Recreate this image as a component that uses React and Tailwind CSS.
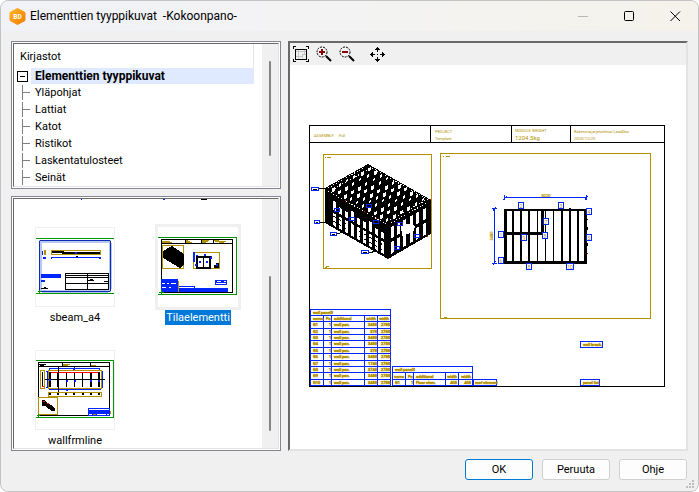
import React from 'react';

const GOLD = '#b39000';
const BLUE = '#0026ff';
const GREEN = '#009600';

const libraries = ['Yläpohjat', 'Lattiat', 'Katot', 'Ristikot', 'Laskentatulosteet', 'Seinät'];

const Logo = () => (
  <svg width="17" height="17" viewBox="0 0 17 17" aria-hidden="true">
    <defs>
      <linearGradient id="logo" x1="0" y1="0" x2="1" y2="1">
        <stop offset="0" stopColor="#ffb61f" />
        <stop offset="1" stopColor="#f77b05" />
      </linearGradient>
    </defs>
    <path d="M8.5 0.5 L16 4.5 V12.5 L8.5 16.5 L1 12.5 V4.5 Z" fill="url(#logo)" stroke="url(#logo)" strokeLinejoin="round" />
    <text x="8.5" y="11" textAnchor="middle" fontSize="6.5" fontWeight="700" fill="#fff">BD</text>
  </svg>
);

const TitleButton = ({ label, children }) => (
  <button aria-label={label} className="flex h-[30px] w-[46px] items-center justify-center">
    {children}
  </button>
);

const TitleBar = () => (
  <header className="flex h-[30px] items-center bg-linear-to-r from-[#f1f2f7] via-[#f3f3f3] to-[#f4f2ea] pl-2">
    <Logo />
    <h1 className="ml-1 flex-1 whitespace-pre text-[12px] leading-4">{'Elementtien tyyppikuvat  -Kokoonpano-'}</h1>
    <TitleButton label="Pienennä">
      <svg width="11" height="11" shapeRendering="crispEdges"><path d="M0 5.5H10" stroke="#b8b8b8" /></svg>
    </TitleButton>
    <TitleButton label="Suurenna">
      <svg width="11" height="11"><rect x="0.5" y="0.5" width="9" height="9" rx="1" fill="none" stroke="#000" /></svg>
    </TitleButton>
    <TitleButton label="Sulje">
      <svg width="11" height="11"><path d="M0.5 0.5L10 10M10 0.5L0.5 10" stroke="#000" /></svg>
    </TitleButton>
  </header>
);

const ListPanel = ({ className, thumb, children }) => (
  <section className={`border border-[#828790] bg-white p-px ${className}`}>
    <div className="flex h-full border border-t-[#696969] border-l-[#696969] border-r-[#e3e3e3] border-b-[#e3e3e3]">
      <div className="min-w-0 flex-1 overflow-hidden">{children}</div>
      <div className="w-4 shrink-0 bg-[#f0f0f0] pl-[7px]">
        <div className={`w-[2px] rounded-full bg-[#858585] ${thumb}`} />
      </div>
    </div>
  </section>
);

const LibraryTree = () => (
  <div className="mr-2 text-[11px]">
    <div className="flex h-6 items-center border-r border-[#e5e5e5] pt-[2px] pl-[6px]">Kirjastot</div>
    <div className="flex h-4 items-center pl-[3px]">
      <button aria-label="Sulje haara" className="flex h-[11px] w-[11px] items-center justify-center border border-black">
        <span className="h-px w-[5px] bg-black" />
      </button>
      <div className="ml-[3px] flex h-4 flex-1 items-center bg-[#dfe9ff] pl-1 text-[12px] font-bold">Elementtien tyyppikuvat</div>
    </div>
    <ul>
      {libraries.map((name) => (
        <li key={name} className="flex h-[17px] items-center pl-2">
          <svg width="8" height="17" shapeRendering="crispEdges" className="mr-[5px]">
            <path d="M0.5 1V16M0 8.5H8" stroke="#808080" />
          </svg>
          <span className="pt-[2px]">{name}</span>
        </li>
      ))}
    </ul>
  </div>
);

const SbeamThumb = () => (
  <svg width="78" height="78" viewBox="36 228 78 78" shapeRendering="crispEdges" fill="none">
    <path d="M36 238.5H114M36 293.5H114" stroke={GREEN} />
    <rect x="40" y="241" width="70" height="50" rx="2" stroke="#b8c6f0" strokeWidth="3" />
    <rect x="39.5" y="240.5" width="71" height="51" rx="2" stroke="#0a2cb4" />
    <path d="M42.500 251V255" stroke={BLUE} />
    <rect x="44" y="250" width="2" height="5" fill={GOLD} />
    <path d="M43 258H46" stroke={BLUE} strokeWidth="2" />
    <rect x="51.5" y="250.5" width="49" height="4" stroke={GOLD} />
    <path d="M52 251.500H64M52 252.500H100M62 253.500H100" stroke="#000" />
    <rect x="75" y="252" width="2" height="2" fill={BLUE} />
    <path d="M51 257.500H101M51 258.500H52M99 258.500H101" stroke={BLUE} />
    <path d="M76 256.500H78" stroke="#000" />
    <rect x="41" y="274" width="20" height="4" fill={BLUE} />
    <rect x="41" y="280" width="4" height="2" fill={BLUE} />
    <path d="M41 288.500H48M44 287.500H46" stroke="#000" />
    <rect x="65.500" y="273.500" width="43" height="16" stroke="#000" />
    <path d="M65 275.500H109M65 277.500H109M65 283.500H109M87.500 273V290M88 280.500H94M90 279.500H93M104 281.500H108" stroke="#000" />
    <path d="M38 291.500H41M39.500 290V293" stroke={GREEN} />
  </svg>
);

const TilaThumb = () => (
  <svg width="80" height="80" viewBox="158 227 80 80" shapeRendering="crispEdges" fill="none">
    <path d="M158 237.500H236.500V294.500H158" stroke={GREEN} />
    <rect x="161.500" y="239.500" width="71" height="53" stroke="#000" />
    <path d="M161 243.500H233M185.500 239V243M201.500 239V243M213.500 239V243" stroke="#000" />
    <path d="M162 241.500H170M162 242.500H172M186 240.500H188M186 241.500H190M186 242.500H192M202 240.500H209M202 241.500H208M202 242.500H206M214 240.500H219M215 241.500H226M219 242.500H224" stroke={GOLD} />
    <rect x="162.500" y="245.500" width="21" height="23" stroke={GOLD} />
    <path d="M163 251L172 246L184 254V264L180 268L163 258Z" fill="#000" />
    <rect x="193.500" y="252.500" width="26" height="16" stroke={GOLD} />
    <path d="M194 252V262M196 256H198M205 254V256M211 256V258" stroke={BLUE} strokeWidth="2" />
    <rect x="197" y="257" width="13" height="11" stroke="#000" strokeWidth="2" />
    <path d="M203.500 257V268" stroke="#000" />
    <path d="M195 264h2v2h-2zM199 261h2v2h-2zM206 261h2v2h-2zM210 257h2v2h-2z" fill={BLUE} />
    <path d="M214 265V268H219V263H216V265Z" fill="#000" />
    <rect x="216" y="264" width="2" height="2" fill={BLUE} />
    <rect x="161" y="279" width="17" height="13" fill={BLUE} />
    <path d="M162 283.500H165M167 283.500H169M171 283.500H176M162 287.500H166M169 287.500H171" stroke="#fff" />
    <path d="M178.500 281V292" stroke={GOLD} />
    <path d="M179 286.500H194.500V288" stroke={BLUE} />
    <rect x="179" y="288" width="49" height="4" fill={BLUE} />
    <rect x="215" y="280" width="12" height="5" fill={BLUE} />
    <path d="M217 281.500H221M224 281.500H226M216 283.500H226" stroke="#fff" />
    <path d="M159 292.500H164M161.500 290V294" stroke={GREEN} />
  </svg>
);

const WallThumb = () => (
  <svg width="78" height="78" viewBox="36 351 78 78" shapeRendering="crispEdges" fill="none">
    <path d="M36 360.500H113.500V417.500H36" stroke={GREEN} />
    <rect x="38.500" y="362.500" width="71" height="53" stroke="#000" />
    <path d="M38 366.500H110M62.500 362V366M90.500 362V366M39 364.500H46M40 365.500H44" stroke="#000" />
    <path d="M63 364.500H70M63 365.500H68M91 365.500H96" stroke={GOLD} />
    <path d="M49 368.500H100M49.500 368V371M99.500 368V371M46 371.500H49M47.500 371V387M46 387.500H49M102.500 371V388M49 389.500H101M74 367V371M66 390.500H68" stroke={BLUE} />
    <rect x="40.500" y="370.500" width="4" height="18" stroke={GOLD} />
    <path d="M42.500 372V386" stroke="#000" />
    <path d="M42 386.500H44M50 372.500H100" stroke="#f00" />
    <rect x="48.500" y="370.500" width="53" height="18" stroke={GOLD} />
    <path d="M50 372V387M58 373V387M91 373V387M99 372V387" stroke="#000" strokeWidth="2" />
    <path d="M66.500 373V387M74.500 373V387M82.500 373V387M45 379.500H105M58.500 367V394" stroke="#000" />
    <path d="M49 379h2v2h-2zM66 380h2v2h-2zM74 380h2v2h-2zM90 380h2v2h-2zM98 380h2v2h-2zM73 368h2v2h-2z" fill={BLUE} />
    <rect x="48.500" y="392.500" width="53" height="4" stroke={GOLD} />
    <path d="M49 394H51M57 394H59M65 394H67M73 394H75M82 394H84M90 394H92M98 394H100" stroke="#000" strokeWidth="2" />
    <rect x="38.500" y="397.500" width="19" height="17" stroke={GOLD} />
    <path d="M42 400L44 400L55 408V411L52 411L45 406H42Z" fill="#000" />
    <path d="M43 401h2M47 403h2" stroke="#f00" />
    <rect x="88.500" y="408.500" width="21" height="7" stroke={BLUE} />
    <rect x="89" y="410" width="21" height="4" fill={BLUE} />
    <path d="M92.500 413V415M96.500 413V415M106.500 413V415" stroke={BLUE} />
    <path d="M93 414.500H96M110.500 411V414" stroke={GOLD} />
    <path d="M37 415.500H40M38.500 414V418" stroke={GREEN} />
  </svg>
);

const DrawingItem = ({ name, selected = false, children }) => (
  <button className="flex w-[86px] flex-col items-center">
    <span className={selected ? 'border-[3px] border-[#f0f0f0]' : 'm-[3px] border border-[#f0f0f0]'}>
      {children}
    </span>
    <span className={`h-[15px] px-px text-[11px] leading-[15px] ${selected ? 'bg-[#0078d7] text-white' : ''}`}>{name}</span>
  </button>
);

const ZoomIcon = ({ plus }) => (
  <svg width="16" height="16" shapeRendering="crispEdges" fill="none">
    <circle cx="6" cy="6" r="5" fill="#f6f6f6" stroke="#000" shapeRendering="auto" strokeDasharray="2 1" />
    <path d="M3 6H9" stroke="#8b0000" strokeWidth="2" />
    {plus && <path d="M6 3V9" stroke="#8b0000" strokeWidth="2" />}
    <path d="M10 10L15 15" stroke="#000" strokeWidth="2" shapeRendering="auto" />
  </svg>
);

const Toolbar = () => (
  <div className="flex h-[22px] items-center bg-[#f0f0f0] pl-[3px]">
    <button aria-label="Sovita">
      <svg width="16" height="16" shapeRendering="crispEdges" fill="none">
        <path d="M0.500 3V0.500H3M13 0.500H15.500V3M15.500 13V15.500H13M3 15.500H0.500V13" stroke="#000" />
        <path d="M3 5.500H13M3 10.500H9M5.500 4V13M11.500 4V9M9.500 9V12M9 8.500H13" stroke="#c4c4c4" />
        <rect x="2.500" y="3.500" width="11" height="10" stroke="#000" />
      </svg>
    </button>
    <button aria-label="Lähennä" className="ml-[7px]"><ZoomIcon plus /></button>
    <button aria-label="Loitonna" className="ml-[7px]"><ZoomIcon /></button>
    <button aria-label="Siirrä" className="ml-[15px]">
      <svg width="15" height="15" shapeRendering="crispEdges">
        <path d="M7 0h1v1h1v1h1v1h-2v2h-1v-2h-2v-1h1v-1h1zM7 15h1v-1h1v-1h1v-1h-2v-2h-1v2h-2v1h1v1h1zM0 7h1v-1h1v-1h1v2h2v1h-2v2h-1v-1h-1v-1h-1zM15 7h-1v-1h-1v-1h-1v2h-2v1h2v2h1v-1h1v-1h1zM7 7h1v1h-1z" />
      </svg>
    </button>
  </div>
);

// Oblique grid on a face: origin, two edge vectors and the cut-out cells in 0..1 units
const cell = (o, u, v, a0, a1, b0, b1) => {
  const p = (a, b) => `${o[0] + u[0] * a + v[0] * b},${o[1] + u[1] * a + v[1] * b}`;
  return `${p(a0, b0)} ${p(a1, b0)} ${p(a1, b1)} ${p(a0, b1)}`;
};

const range = (n) => Array.from({ length: n }, (_, i) => i);

// Openings seen through the roof, upright slits of a few sizes
const roofOpenings = range(10).flatMap((i) =>
  range(6).map((j) => {
    const a = (i + 0.55) / 10.5;
    const b = (j + 0.5) / 6;
    const k = (i * 7 + j * 5) % 6;
    return { x: Math.round(325 + 63 * a + 43 * b), y: Math.round(188 + 36 * a - 24 * b), w: k < 3 ? 3 : 2, h: k === 4 ? 2 : 4 - (k % 2) };
  })
);

const Module3d = () => (
  <g shapeRendering="crispEdges">
    <polygon points="325,188 368,164 431,200 431,234 388,259 325,223" fill="#000" />
    {/* roof */}
    {roofOpenings.map(({ x, y, w, h }) => (
      <path key={`${x}-${y}`} d={`M${x} ${y}v${h}l${w} -1v${-h}z`} fill="#fff" />
    ))}
    <path d="M328 188L367 166M332 190L371 168M372 168L427 199M328 191L386 224M390 220L428 199M391 223L430 201" stroke="#fff" strokeDasharray="1 2" fill="none" />
    {/* long wall */}
    {range(9).map((i) => (
      <g key={i} fill="#fff">
        <polygon points={cell([325, 188], [62, 35.500], [0, 35], 0.130 + i * 0.097, 0.182 + i * 0.097, i % 3 ? 0.32 : 0.22, 0.5)} />
        <polygon points={cell([325, 188], [62, 35.500], [0, 35], 0.130 + i * 0.097, 0.182 + i * 0.097, 0.58, 0.93)} />
      </g>
    ))}
    <path d="M333 216L385 246M333 221L383 250" stroke="#000" strokeDasharray="3 3" fill="none" />
    {/* gable */}
    {range(6).map((i) => (
      <g key={i} fill="#fff">
        <polygon points={cell([388, 224], [43, -24], [0, 35], 0.06 + i * 0.15, 0.13 + i * 0.15, 0.14, 0.46)} />
        <polygon points={cell([388, 224], [43, -24], [0, 35], 0.06 + i * 0.15, 0.13 + i * 0.15, 0.56, 0.9)} />
      </g>
    ))}
    <polygon points="401,226 412,223 415,227 413,232 402,236" fill="#fff" />
    <path d="M319 188.500H325M318 222.500H325M336 234L344 232M368 253L377 251" stroke="#000" />
    <path d="M345 200.500h1M364 211.500h1M376 218.500h1M430 199.500h1M427 236.500h1M388 258.500h1" stroke="#f00" />
    {[[311, 187, 7], [314, 220, 5], [330, 232, 6], [361, 250, 7]].map(([x, y, w]) => (
      <g key={x} fill="none">
        <rect x={x + 0.5} y={y + 0.5} width={w} height="3" fill="#fff" stroke={BLUE} />
        <path d={`M${x + 2} ${y + 2.5}H${x + w - 1}`} stroke="#000" />
      </g>
    ))}
    {[[334, 208], [349, 217], [366, 204], [373, 220], [397, 222], [414, 234], [394, 246]].map(([x, y]) => (
      <rect key={x} x={x + 0.5} y={y + 0.5} width="5" height="3" fill="none" stroke={BLUE} />
    ))}
  </g>
);

const tags = [
  [518, 202, '2'], [558, 202, '3'], [586, 208, '4'], [586, 234, '5'], [543, 218, '7'], [542, 232, '8'],
  [521, 234, '9'], [498, 231, '1'], [498, 257, '6'], [526, 263, '8'], [566, 263, '10'],
];

const FloorPlan = () => (
  <g shapeRendering="crispEdges">
    <path d="M504 197.500H587M504.500 195V200M586.500 195V200M494.500 208V264M492 208.500H497M492 263.500H497M493 211L496 207M493 265L496 261M503 200L507 196M585 200L588 196" stroke={BLUE} fill="none" />
    <rect x="505" y="210" width="81" height="52" fill="#fff" stroke="#000" strokeWidth="2" />
    <path d="M505.500 209V264M585.500 209V264M504 262.500H587" stroke="#000" strokeWidth="3" />
    <path d="M513 210V262M521 210V262M529 210V262M562 210V262M570 208V262M578 210V262" stroke="#000" strokeWidth="2" />
    <path d="M537.500 210V262M545.500 210V262M553.500 210V262" stroke="#000" />
    <path d="M506 233.500H543M542.500 210V233" stroke="#000" strokeWidth="3" />
    <path d="M587.500 219v1M587.500 227v3M587.500 243v3" stroke="#000" />
    <path d="M587 253.500h1" stroke="#f00" />
    {tags.map(([x, y, n]) => (
      <g key={`${x}-${y}`}>
        <rect x={x + 0.5} y={y + 0.5} width={n === '10' ? 7 : 5} height="6" fill="#fff" stroke={BLUE} />
        <text x={x + (n === '10' ? 4 : 3)} y={y + 6} fontSize="5" textAnchor="middle" fill={GOLD}>{n}</text>
      </g>
    ))}
    <g fill={GOLD} stroke={GOLD} strokeWidth="0.2" fontSize="4" textAnchor="middle">
      <text x="546" y="197">8220</text>
      <text transform="translate(493 236) rotate(-90)">5480</text>
    </g>
  </g>
);

const rowLines = [315, 321, 328, 334, 340, 347, 353, 360, 366, 372, 379];
const widths = ['3488', '378', '3488', '3488', '378', '3488', '1748', '3748', '3488', '3488'];

const PartTables = () => (
  <g>
    <g shapeRendering="crispEdges" fill="none" stroke={BLUE}>
      <rect x="310.500" y="309.500" width="80" height="76" />
      {rowLines.map((y) => <path key={y} d={`M310 ${y + 0.5}H391`} />)}
      <path d="M323.500 315V386M331.500 315V386M364.500 315V386M377.500 315V386" />
      <rect x="392.500" y="366.500" width="80" height="19" />
      <path d="M392 372.500H473M392 379.500H473M405.500 372V386M413.500 372V386M445.500 372V386M458.500 372V386" />
      <rect x="473.500" y="379.500" width="23" height="6" />
      <rect x="580.500" y="341.500" width="22" height="6" />
      <rect x="580.500" y="379.500" width="19" height="6" />
    </g>
    <g fill={GOLD} stroke={GOLD} strokeWidth="0.5" fontSize="4">
      <text x="313" y="314">wall panel3</text>
      <text x="313" y="320">name</text>
      <text x="326" y="320">Pc</text>
      <text x="334" y="320">additional</text>
      <text x="376" y="320" textAnchor="end">width</text>
      <text x="389" y="320" textAnchor="end">width</text>
      {widths.map((w, i) => {
        const y = rowLines[i + 1] + 5;
        return (
          <g key={i}>
            <text x="313" y={y}>{`G${i + 1}`}</text>
            <text x="329" y={y}>1</text>
            <text x="334" y={y}>wall pan.</text>
            <text x="377" y={y} textAnchor="end">{w}</text>
            <text x="390" y={y} textAnchor="end">2788</text>
          </g>
        );
      })}
      <text x="395" y="371">wall panel3</text>
      <text x="394" y="378">name</text>
      <text x="408" y="378">Pc</text>
      <text x="416" y="378">additional</text>
      <text x="457" y="378" textAnchor="end">width</text>
      <text x="471" y="378" textAnchor="end">width</text>
      <text x="395" y="384">G1</text>
      <text x="411" y="384">1</text>
      <text x="416" y="384">Floor elem.</text>
      <text x="457" y="384" textAnchor="end">408</text>
      <text x="471" y="384" textAnchor="end">408</text>
      <text x="475" y="384">roof element</text>
      <text x="583" y="346">wall brack.</text>
      <text x="583" y="384">panel list</text>
    </g>
  </g>
);

const Preview = () => (
  <svg viewBox="290 65 396 382" className="w-full" role="img" aria-label="Tilaelementti" fill="none">
    <g shapeRendering="crispEdges">
      <rect x="309.500" y="125.500" width="355" height="261" stroke="#000" />
      <path d="M309 142.500H665M430.500 125V142M511.500 125V142M570.500 125V142" stroke="#000" />
      <rect x="323.500" y="154.500" width="108" height="114" stroke={GOLD} />
      <rect x="440.500" y="153.500" width="210" height="165" stroke={GOLD} />
      <path d="M325 157.500h1M327 157.500h4M443 156.500h1M446 156.500h4M325 267.500h2M326 266.500h3M444 317.500h3" stroke={GOLD} />
    </g>
    <g fill={GOLD} fontSize="4">
      <text x="314" y="137">ASSEMBLY</text>
      <text x="339" y="137">Full</text>
      <text x="435" y="133">PROJECT</text>
      <text x="435" y="140">Template</text>
      <text x="515" y="132">MODULE WEIGHT</text>
      <text x="515" y="140" fontSize="6">1204.5kg</text>
      <text x="574" y="133">Rakennusjarjestelmat LaadDoc</text>
      <text x="574" y="140">2020/12/20</text>
    </g>
    <Module3d />
    <FloorPlan />
    <PartTables />
  </svg>
);

const DialogButton = ({ primary = false, children }) => (
  <button
    className={`h-[21px] w-[68px] rounded-[3px] border bg-[#fdfdfd] text-[11px] leading-4 ${
      primary ? 'border-[#0078d4]' : 'border-[#d0d0d0]'
    }`}
  >
    {children}
  </button>
);

export default function App() {
  return (
    <div className="flex min-h-screen bg-white font-['Roboto',sans-serif] text-[#000]">
      <div className="relative flex flex-1 flex-col overflow-hidden rounded-lg border border-[#c3c3c3] bg-[#f0f0f0]">
        <TitleBar />
        <main className="flex flex-1 gap-[7px] pt-[10px] pr-[10px] pl-[10px]">
          <div className="flex w-[270px] shrink-0 flex-col gap-[7px]">
            <ListPanel className="h-[148px]" thumb="mt-[17px] h-[95px]">
              <LibraryTree />
            </ListPanel>
            <ListPanel className="flex-1" thumb="mt-[77px] h-[155px]">
              <svg width="240" height="2" shapeRendering="crispEdges" className="mb-[23px]">
                <path d="M67 0.500h1M149 0.500h2" stroke={BLUE} />
                <path d="M187 0.500h6" stroke="#000" />
              </svg>
              <div className="flex flex-wrap gap-x-[37px] gap-y-[22px] pl-[18px]">
                <DrawingItem name="sbeam_a4"><SbeamThumb /></DrawingItem>
                <DrawingItem name="Tilaelementti" selected><TilaThumb /></DrawingItem>
                <DrawingItem name="wallfrmline"><WallThumb /></DrawingItem>
              </div>
            </ListPanel>
          </div>
          <section className="min-w-0 flex-1 border-2 border-t-[#696969] border-l-[#696969] border-r-[#e3e3e3] border-b-[#e3e3e3] bg-white">
            <Toolbar />
            <Preview />
          </section>
        </main>
        <footer className="flex justify-end gap-[9px] pt-2 pr-[11px] pb-[11px]">
          <DialogButton primary>OK</DialogButton>
          <DialogButton>Peruuta</DialogButton>
          <DialogButton>Ohje</DialogButton>
        </footer>
        <svg width="9" height="9" shapeRendering="crispEdges" className="absolute right-[3px] bottom-[2px]">
          <path d="M6 0h2v2h-2zM3 3h2v2h-2zM6 3h2v2h-2zM0 6h2v2h-2zM3 6h2v2h-2zM6 6h2v2h-2z" fill="#bfbfbf" />
        </svg>
      </div>
    </div>
  );
}
